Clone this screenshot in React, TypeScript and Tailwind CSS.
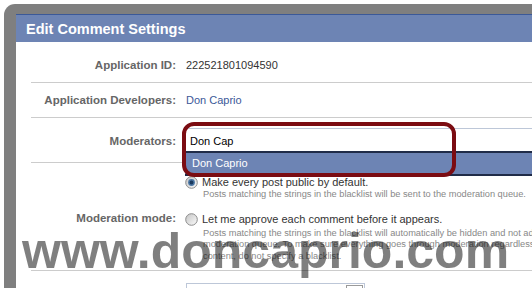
import React from "react";

function Radio({ checked }: { checked?: boolean }) {
  const id = checked ? "rg1" : "rg2";
  return (
    <svg width="13" height="13" viewBox="0 0 13 13" className="shrink-0">
      <defs>
        <linearGradient id={id} x1="0" y1="0" x2="1" y2="1">
          <stop offset="0" stopColor="#c4c4c4" />
          <stop offset="1" stopColor="#fbfbfb" />
        </linearGradient>
      </defs>
      <circle cx="6.5" cy="6.5" r="5.8" fill={`url(#${id})`} stroke="#8c8c8c" strokeWidth="1" />
      {checked && (
        <>
          <circle cx="6.5" cy="6.5" r="3.4" fill="#4a76a4" />
          <circle cx="6.5" cy="6.5" r="1.9" fill="#1b3a5e" />
        </>
      )}
    </svg>
  );
}

export default function App() {
  return (
    <div className="relative w-[532px] h-[288px] overflow-hidden bg-white font-['Liberation_Sans',Arial,sans-serif]">
      <div className="ml-[4px] mt-[4px] h-[284px] bg-[#7f7f7f] rounded-tl-[11px] pl-[12px] pt-[10px]">
        <div className="h-full bg-white">
          <div className="h-[28px] bg-[#6d84b4] border-t border-[#3b5998] flex items-center pl-[10px] pt-[2px] text-white font-bold text-[14.5px] whitespace-nowrap">
            Edit Comment Settings
          </div>
          <div className="pl-[15px]">
            {/* Application ID */}
            <div className="flex h-[41px] border-b border-[#cccccc] pt-[16px]">
              <div className="w-[145px] text-right font-bold text-[11.5px] leading-[14px] text-[#666666]">
                Application ID:
              </div>
              <div className="ml-[10px] text-[11px] leading-[14px] text-[#333333]">222521801094590</div>
            </div>
            {/* Developers */}
            <div className="flex h-[35px] border-b border-[#cccccc] pt-[10px]">
              <div className="w-[145px] text-right font-bold text-[11.5px] leading-[14px] text-[#666666] whitespace-nowrap">
                Application Developers:
              </div>
              <div className="ml-[10px] text-[11px] leading-[14px] text-[#3b5998]">Don Caprio</div>
            </div>
            {/* Moderators */}
            <div className="flex items-start h-[45px] border-b border-[#cccccc]">
              <div className="mt-[16px] w-[145px] text-right font-bold text-[11.5px] leading-[14px] text-[#666666]">
                Moderators:
              </div>
              <div className="ml-[8px] mt-[10px] flex-1 h-[24px] border-t border-l border-[#bdc7d8] bg-white pl-[5px] pt-[5px] text-[11px] leading-[14px] text-black">
                Don Cap
              </div>
            </div>
            {/* Moderation mode */}
            <div className="flex h-[108px] border-b border-[#cccccc]">
              <div className="self-start mt-[48px] w-[145px] shrink-0 text-right font-bold text-[11.5px] leading-[14px] text-[#666666] whitespace-nowrap">
                Moderation mode:
              </div>
              <div className="ml-[9px] pt-[12px] whitespace-nowrap">
                <div className="flex items-center h-[14px] gap-[4px] text-[11px] text-[#333333]">
                  <Radio checked />
                  <span>Make every post public by default.</span>
                </div>
                <div className="pl-[18px] text-[9.25px] leading-[11.5px] text-[#888888]">
                  Posts matching the strings in the blacklist will be sent to the moderation queue.
                </div>
                <div className="mt-[12px] flex items-center h-[14px] gap-[4px] text-[11px] text-[#333333]">
                  <Radio />
                  <span>Let me approve each comment before it appears.</span>
                </div>
                <div className="mt-[1px] pl-[18px] text-[9.25px] leading-[11.5px] text-[#888888]">
                  <div>Posts matching the strings in the blacklist will automatically be hidden and not added to the</div>
                  <div>moderation queue. To make sure everything goes through moderation regardless of its</div>
                  <div>content, do not specify a blacklist.</div>
                </div>
              </div>
            </div>
            {/* bottom */}
            <div className="flex pt-[12px]">
              <div className="w-[145px]" />
              <div className="relative ml-[10px] w-[179px] h-[24px] border border-[#bdc7d8] bg-white">
                <div className="absolute right-[1px] top-[1px] w-[17px] h-[17px] border border-[#9a9a9a]" />
              </div>
            </div>
          </div>
        </div>
      </div>

      {/* typeahead dropdown */}
      <div className="absolute left-[185px] top-[151px] right-0 h-[25px] border-t-2 border-b-2 border-[#202c48] bg-[#6d84b4] flex items-center pl-[7px] text-[11px] text-white">
        Don Caprio
      </div>

      {/* red highlight */}
      <div className="absolute left-[182px] top-[122px] w-[274px] h-[55px] border-4 border-[#7b0c12] rounded-[12px]" />

      {/* watermark */}
      <div className="absolute left-[22px] top-[226px] text-[50px] leading-[50px] font-bold text-black/50 whitespace-nowrap pointer-events-none">
        www.doncaprio.com
      </div>
    </div>
  );
}
